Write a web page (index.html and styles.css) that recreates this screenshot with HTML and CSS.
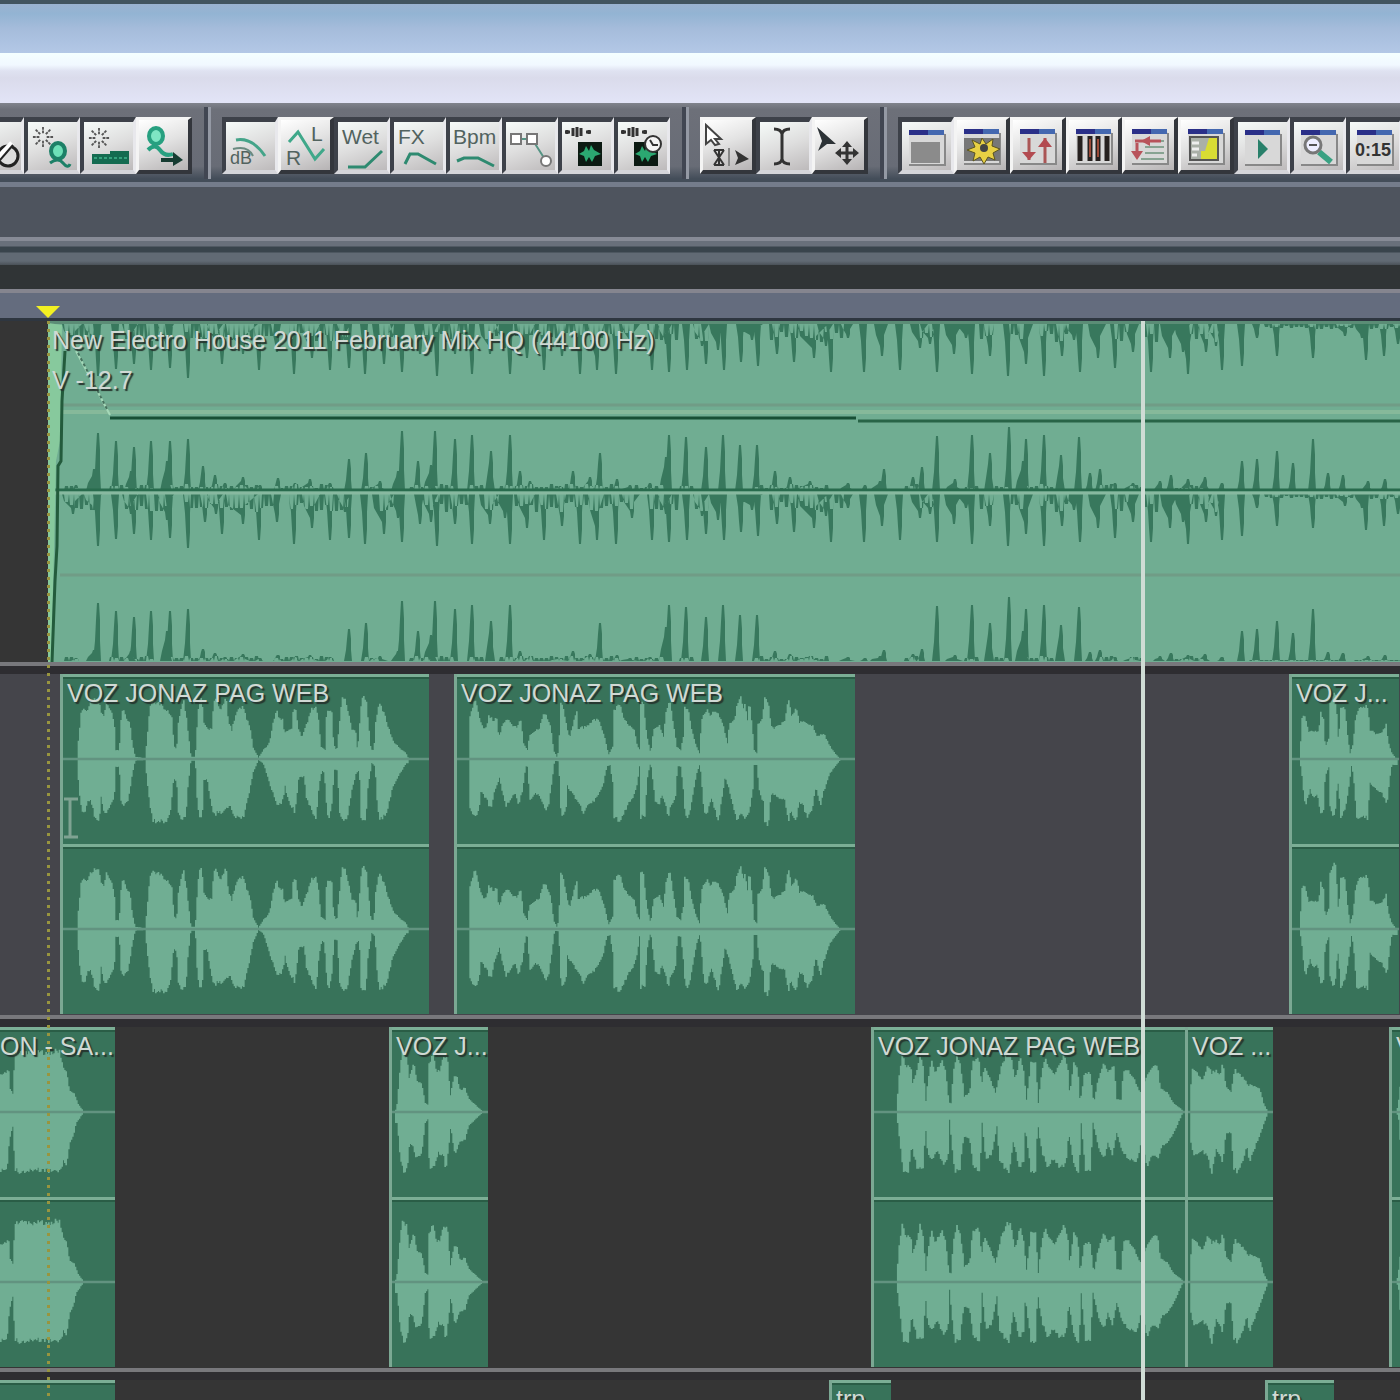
FILE: index.html
```html
<!DOCTYPE html>
<html lang="en">
<head>
  <meta charset="UTF-8" />
  <meta name="viewport" content="width=device-width, initial-scale=1.0"/>
  <title>Multitrack</title>
  <link rel="stylesheet" href="styles.css">
</head>
<body>

  <!-- Shared icon parts -->
  <svg class="defs" aria-hidden="true">
    <symbol id="burst" viewBox="-12 -12 24 24">
      <path d="M0-11V-4M0 11V4M-11 0H-4M11 0H4M-8-8L-3-3M8-8L3-3M-8 8L-3 3M8 8L3 3" fill="none" stroke="#555" stroke-width="2" stroke-dasharray="3 1"/>
    </symbol>
    <symbol id="window" viewBox="0 0 56 56">
      <path d="M11 15H47V48H11Z" fill="#d8d8d8"/>
      <path d="M11 47H47V16" fill="none" stroke="#888" stroke-width="2"/>
      <path d="M11 12H46V17H11Z" fill="#4468b0"/>
      <path d="M11 12H30V17H11Z" fill="#2a2f88"/>
    </symbol>
    <symbol id="chip" viewBox="0 0 56 56">
      <path d="M7 14H12M28 14H33M9 12V16M15 10V18M19 9V19M23 10V18M31 12V16" stroke="#333" stroke-width="3"/>
      <path d="M20 24H44V48H20Z" fill="#0c1a12"/>
      <path d="M21 36L26 33L28 28L31 33L33 27L36 32L43 36L37 38L34 44L31 39L28 44L26 38Z" fill="#2ba871"/>
    </symbol>
  </svg>

  <header>
    <div class="title-bar"></div>
    <div class="menu-bar"></div>
  </header>

  <nav class="toolbar">
    <div class="group">
      <button class="tool pressed" aria-label="Draw"><svg viewBox="0 0 56 56"><circle cx="40" cy="38" r="10" fill="#ddd" stroke="#222" stroke-width="3"/><path d="M28 42L44 25" stroke="#fff" stroke-width="5"/><path d="M32 42L45 27" stroke="#222" stroke-width="2"/></svg></button>
      <button class="tool pressed" aria-label="Quick effect"><svg viewBox="0 0 56 56"><use href="#burst" x="8" y="8" width="22" height="22"/><ellipse cx="34" cy="33" rx="7" ry="8" fill="#6ee0b8" stroke="#1d8067" stroke-width="4"/><path d="M26 45Q34 39 39 45T46 46" fill="none" stroke="#1d8067" stroke-width="3"/></svg></button>
      <button class="tool pressed" aria-label="Quick effect on clip"><svg viewBox="0 0 56 56"><use href="#burst" x="8" y="9" width="22" height="22"/><path d="M12 36H30V33H49V46H12Z" fill="#146b50"/><path d="M14 40H48" stroke="#35a27d" stroke-width="2" stroke-dasharray="3 2"/></svg></button>
      <button class="tool" aria-label="Apply effect"><svg viewBox="0 0 56 56"><ellipse cx="21" cy="19" rx="7" ry="8" fill="#7ee6c4" stroke="#27a080" stroke-width="4"/><path d="M13 33Q20 26 25 33T38 37" fill="none" stroke="#27a080" stroke-width="4"/><path d="M26 41H38V35L48 43L38 49V45H26Z" fill="#163c32"/></svg></button>
    </div>

    <div class="group">
      <button class="tool pressed" aria-label="Volume envelopes"><svg viewBox="0 0 56 56"><path d="M14 22Q30 19 43 38" fill="none" stroke="#44a489" stroke-width="3"/><text x="8" y="46" class="ico-text small">dB</text><path d="M11 31Q26 27 31 38" fill="none" stroke="#6a8a80" stroke-width="2"/></svg></button>
      <button class="tool" aria-label="Pan envelopes"><svg viewBox="0 0 56 56"><path d="M12 25L21 15L38 42L47 32" fill="none" stroke="#3fa88a" stroke-width="3"/><text x="34" y="24" class="ico-text">L</text><text x="9" y="48" class="ico-text">R</text></svg></button>
      <button class="tool pressed" aria-label="Wet envelopes"><svg viewBox="0 0 56 56"><text x="8" y="26" class="ico-text">Wet</text><path d="M14 49H31L48 33" fill="none" stroke="#2e8a70" stroke-width="3"/></svg></button>
      <button class="tool pressed" aria-label="FX envelopes"><svg viewBox="0 0 56 56"><text x="8" y="26" class="ico-text">FX</text><path d="M15 46L20 36H28L46 46" fill="none" stroke="#2e8a70" stroke-width="3"/></svg></button>
      <button class="tool pressed" aria-label="Tempo envelopes"><svg viewBox="0 0 56 56"><text x="7" y="26" class="ico-text">Bpm</text><path d="M11 43L18 40H32L48 48" fill="none" stroke="#2e8a70" stroke-width="3"/></svg></button>
      <button class="tool pressed" aria-label="Envelope editing"><svg viewBox="0 0 56 56"><path d="M14 21H30L44 43" fill="none" stroke="#559484" stroke-width="2"/><g fill="#fff" stroke="#777" stroke-width="2"><rect x="9" y="16" width="10" height="10"/><rect x="25" y="16" width="10" height="10"/><circle cx="44" cy="43" r="5"/></g></svg></button>
      <button class="tool pressed" aria-label="Clip to wave"><svg viewBox="0 0 56 56"><use href="#chip"/></svg></button>
      <button class="tool pressed" aria-label="Clip time stretch"><svg viewBox="0 0 56 56"><use href="#chip"/><circle cx="39" cy="26" r="8" fill="#f4f4f4" stroke="#333" stroke-width="2"/><path d="M36 22L39 27L44 27" fill="none" stroke="#333" stroke-width="2"/></svg></button>
    </div>

    <div class="group">
      <button class="tool" aria-label="Hybrid tool"><svg viewBox="0 0 56 56"><path d="M7 8L22 22H16L20 27L16 28L12 23L7 27Z" fill="#fff" stroke="#444" stroke-width="2"/><path d="M15 33L25 48M25 33L15 48M15 33H25M15 48H25M20 33V48" stroke="#333" stroke-width="2"/><path d="M30 31V49" stroke="#888" stroke-width="2"/><path d="M36 33L50 42L36 48L39 41Z" fill="#333"/></svg></button>
      <button class="tool pressed" aria-label="Time selection tool"><svg viewBox="0 0 56 56"><path d="M18 11Q25 11 26 16Q27 11 34 11M18 46Q25 46 26 41Q27 46 34 46M26 15V42" fill="none" stroke="#333" stroke-width="3"/></svg></button>
      <button class="tool" aria-label="Move clip tool"><svg viewBox="0 0 56 56"><path d="M6 10L25 27L16 27L7 34L11 24Z" fill="#2c3236"/><path d="M36 27V45M27 36H45" stroke="#333" stroke-width="3"/><path d="M36 24L41 30H31ZM36 48L41 42H31ZM24 36L30 31V41ZM48 36L42 31V41Z" fill="#333"/></svg></button>
    </div>

    <div class="group">
      <button class="tool pressed" aria-label="Organizer"><svg viewBox="0 0 56 56"><use href="#window"/><path d="M13 24H42V45H13Z" fill="#8b8b8b"/></svg></button>
      <button class="tool" aria-label="Cue list"><svg viewBox="0 0 56 56"><use href="#window"/><path d="M11 21H47V44H11Z" fill="#777"/><path d="M29 21L33 27L40 22L39 29L47 32L40 36L42 43L35 40L31 47L27 40L20 44L22 36L14 33L22 30L19 23L27 27Z" fill="#e8d044" stroke="#5b5420"/><circle cx="31" cy="31" r="4" fill="#444"/></svg></button>
      <button class="tool" aria-label="Mixer"><svg viewBox="0 0 56 56"><use href="#window"/><path d="M20 21V43M36 21V46" stroke="#a55" stroke-width="3"/><path d="M13 35H27L20 43ZM29 30H43L36 21Z" fill="#b34a50"/></svg></button>
      <button class="tool" aria-label="Track EQ"><svg viewBox="0 0 56 56"><use href="#window"/><path d="M15 19V44M25 19V44M33 19V44M42 19V44" stroke="#26211f" stroke-width="5"/><path d="M25 22V40M33 22V40" stroke="#9b4a38" stroke-width="2"/></svg></button>
      <button class="tool" aria-label="Track properties"><svg viewBox="0 0 56 56"><use href="#window"/><path d="M18 24H43M24 30H43M24 36H43M20 42H43" stroke="#87a392" stroke-width="2"/><path d="M14 24H40" stroke="#b8535b" stroke-width="3"/><path d="M20 24L29 19V29ZM10 34H22L16 43Z" fill="#b8535b"/><path d="M16 26V36" stroke="#b8535b" stroke-width="3"/></svg></button>
      <button class="tool" aria-label="Load meter"><svg viewBox="0 0 56 56"><use href="#window"/><path d="M13 20H41V43H13Z" fill="#aab0a8" stroke="#555" stroke-width="2"/><path d="M32 21H40V42H24L24 34L28 34Z" fill="#d8dc34"/><path d="M15 26H22M15 32H22M15 38H20" stroke="#eee" stroke-width="3"/></svg></button>
      <button class="tool pressed" aria-label="Transport"><svg viewBox="0 0 56 56"><use href="#window"/><path d="M24 21L34 31L24 41Z" fill="#28806a"/></svg></button>
      <button class="tool pressed" aria-label="Zoom controls"><svg viewBox="0 0 56 56"><use href="#window"/><path d="M29 34L41 44" stroke="#3aa283" stroke-width="6"/><circle cx="23" cy="27" r="8" fill="#eef" stroke="#777" stroke-width="3"/><path d="M19 27H27" stroke="#555" stroke-width="2"/></svg></button>
      <button class="tool pressed" aria-label="Time display"><svg viewBox="0 0 56 56"><use href="#window"/><text x="9" y="38" class="ico-text time">0:15</text></svg></button>
    </div>
  </nav>

  <div class="dock"></div>
  <div class="splitter"></div>
  <div class="overview"></div>
  <div class="ruler"></div>

  <main class="session">
    <section class="track">
      <div class="clip mix" data-start="48" data-end="1400">
        <svg class="mix-wave" viewBox="48 0 1352 341" preserveAspectRatio="none">
          <path id="mixSpikes" class="spikes"/>
          <path d="M60 84H1400M60 254H1400" class="grid-line"/>
          <path d="M60 91H1400" class="level-light"/>
          <path d="M48 169H1400" class="zero-dark"/>
          <path d="M48 172H1400" class="zero-light"/>
          <path d="M76 30L110 94" class="pan-light"/>
          <path d="M78 32L108 90" class="pan-dark"/>
          <path d="M110 97H856" class="volume"/>
          <path d="M858 100H1400" class="volume thin"/>
          <path d="M48 2L62 4L60 120L56 140L54 230L51 341H48Z" class="fade-fill"/>
          <path d="M65 30L62 80L61 140L58 145L57 225L55 260L52 341" class="fade-dark"/>
        </svg>
        <span class="clip-name">New Electro House 2011 February Mix HQ (44100 Hz)</span>
        <span class="clip-volume">V -12.7</span>
      </div>
    </section>

    <section class="track grey">
      <div class="clip" data-start="60" data-end="429" data-wave="intro"><span class="clip-name">VOZ JONAZ PAG WEB</span></div>
      <div class="clip" data-start="454" data-end="855" data-wave="verse"><span class="clip-name">VOZ JONAZ PAG WEB</span></div>
      <div class="clip" data-start="1289" data-end="1399" data-wave="shout"><span class="clip-name">VOZ J...</span></div>
    </section>

    <section class="track">
      <div class="clip open" data-start="0" data-end="115" data-wave="station"><span class="clip-name">ON - SA...</span></div>
      <div class="clip" data-start="389" data-end="488" data-wave="short"><span class="clip-name">VOZ J...</span></div>
      <div class="clip" data-start="871" data-end="1185" data-wave="hook"><span class="clip-name">VOZ JONAZ PAG WEB</span></div>
      <div class="clip" data-start="1185" data-end="1273" data-wave="tail"><span class="clip-name">VOZ ...</span></div>
      <div class="clip" data-start="1389" data-end="1400" data-wave="next"><span class="clip-name">V</span></div>
    </section>

    <section class="track">
      <div class="clip open" data-start="0" data-end="115" data-wave="silent"></div>
      <div class="clip" data-start="829" data-end="891" data-wave="silent"><span class="clip-name">trp...</span></div>
      <div class="clip" data-start="1265" data-end="1334" data-wave="silent"><span class="clip-name">trp...</span></div>
    </section>

    <!-- Start marker, playhead and mouse pointer lie over the tracks -->
    <div class="marker"></div>
    <div class="playhead"></div>
    <svg class="pointer" viewBox="0 0 16 42"><path d="M0 2H14M0 40H14M6 2V40" fill="none" stroke="#7fa392" stroke-width="3"/></svg>
  </main>

  <script src="script.js"></script>
</body>
</html>
```

FILE: styles.css
```css
body {
  font-family: "Liberation Sans", Arial, sans-serif;
  margin: 0;
  height: 100vh;
  overflow: hidden;
  display: flex;
  flex-direction: column;
  background-color: #353535;
}

.defs {
  position: absolute;
  width: 0;
  height: 0;
}

.title-bar {
  height: 49px;
  border-top: 4px solid #42545f;
  background: linear-gradient(#9ab2d0, #93b4d3 20%, #a5bcdb 50%, #b3c8e6);
}

.menu-bar {
  height: 50px;
  background: linear-gradient(#f4ffff, #f1f8ff 24%, #dfe2f1 36%, #dadbeb 50%, #e2e4f7);
}

.toolbar {
  display: flex;
  padding: 14px 0 8px;
  background: linear-gradient(#80838c, #6d7079 8%, #686c76 80%, #434d59 96%);
  border-bottom: 5px solid #747c8b;
  flex-shrink: 0;
}

.group {
  display: flex;
  flex-shrink: 0;
  position: relative;
  margin-left: 30px;
}

.group:first-child {
  margin-left: -32px;
}

.group + .group::before {
  content: "";
  position: absolute;
  left: -18px;
  top: -10px;
  bottom: -5px;
  width: 3px;
  border-left: 4px solid #414652;
  background-color: #9499a4;
}

.tool {
  width: 56px;
  height: 57px;
  padding: 0;
  border: 3px solid;
  border-color: #f4f4f4 #33363c #33363c #f4f4f4;
  border-right-width: 4px;
  border-bottom-width: 4px;
  background: linear-gradient(160deg, #fff, #e3e3e3 45%, #b6b3b4);
  overflow: hidden;
}

.tool.pressed {
  border-color: #3d4149 #e8e8ec #d4d5da #3d4149;
  border-top-width: 5px;
  border-left-width: 4px;
  border-right-width: 3px;
  background: linear-gradient(160deg, #f6fbf9, #dedede 50%, #bdbabb);
}

.tool svg {
  display: block;
  width: 56px;
  height: 56px;
  margin: -5px -4px;
}

.tool.pressed svg {
  margin: -4px;
}

.ico-text {
  font-size: 21px;
  fill: #52635f;
}

.ico-text.small {
  font-size: 18px;
}

.ico-text.time {
  font-size: 18px;
  font-weight: bold;
  fill: #333;
}

.dock {
  height: 50px;
  flex-shrink: 0;
  background-color: #4e545e;
}

.splitter {
  height: 28px;
  flex-shrink: 0;
  background: linear-gradient(#878b96 4px, #69707b 4px 9px, #39444c 10px 15px, #616a74 16px 24px, #4a5158);
}

.overview {
  height: 24px;
  flex-shrink: 0;
  background-color: #303436;
}

.ruler {
  height: 25px;
  flex-shrink: 0;
  border-top: 4px solid #85858f;
  border-bottom: 3px solid #2e3640;
  background-color: #646c7e;
}

/* Tracks */
.session {
  position: relative;
  flex: 1;
  overflow: hidden;
}

.track {
  display: flex;
  box-sizing: border-box;
  height: 353px;
  border-bottom: 8px solid #2e2d31;
  background-color: #353535;
  box-shadow: inset 0 -4px #78787c;
  overflow: hidden;
}

.track.grey {
  background-color: #45454b;
}

.clip {
  position: relative;
  box-sizing: border-box;
  flex-shrink: 0;
  height: 340px;
  border-left: 3px solid #7ba893;
  background-color: #38735a;
}

.clip.open {
  border-left: 0;
}

.lane {
  display: block;
  width: 100%;
  height: 170px;
  box-shadow: inset 0 3px #7bae95, inset 0 5px #2a5d46;
}

.lane .wave {
  fill: #70ae93;
}

.lane .center {
  fill: none;
  stroke: #629380;
  stroke-width: 7;
}

.clip-name,
.clip-volume {
  position: absolute;
  left: 4px;
  top: 5px;
  font-size: 25px;
  line-height: 28px;
  white-space: nowrap;
  color: #d0d9d4;
  text-shadow: 2px 2px 1px #26352e;
}

.clip.open .clip-name {
  left: 0;
}

/* Music bed */
.clip.mix {
  height: 341px;
  border-left: 0;
  background-color: #70ad92;
}

.clip-volume {
  top: 45px;
}

.mix-wave {
  display: block;
  width: 100%;
  height: 341px;
  box-shadow: inset 0 3px #5b8d76;
}

.mix-wave path {
  fill: none;
  stroke-width: 2;
}

.mix-wave .spikes {
  fill: #38785d;
}

.mix-wave .grid-line {
  stroke: #709c86;
  stroke-width: 3;
}

.mix-wave .level-light {
  stroke: #86b99a;
  stroke-width: 4;
}

.mix-wave .zero-dark {
  stroke: #286b4d;
  stroke-width: 3;
}

.mix-wave .zero-light {
  stroke: #88b9a0;
  stroke-width: 3;
}

.mix-wave .pan-light {
  stroke: #a4d8b8;
}

.mix-wave .pan-dark {
  stroke: #46725e;
  stroke-dasharray: 3 3;
}

.mix-wave .volume {
  stroke: #174f35;
  stroke-width: 3;
}

.mix-wave .volume.thin {
  stroke: #286447;
}

.mix-wave .fade-fill {
  fill: #87c99d;
}

.mix-wave .fade-dark {
  stroke: #235b3c;
  stroke-width: 3;
}

/* Overlays */
.marker {
  position: absolute;
  left: 47px;
  top: 0;
  bottom: 0;
  width: 3px;
  background: repeating-linear-gradient(#98953f 0 3px, transparent 3px 8px);
}

.ruler::after {
  content: "";
  display: block;
  width: 24px;
  height: 12px;
  margin: 13px 0 0 36px;
  background-color: #f2f022;
  clip-path: polygon(0 0, 100% 0, 50% 100%);
}

.playhead {
  position: absolute;
  left: calc(1141% / 14);
  top: 0;
  bottom: 0;
  width: 4px;
  background-color: #cfdcd5;
}

.pointer {
  position: absolute;
  left: 64px;
  top: 476px;
  width: 16px;
  height: 42px;
}
```

FILE: script.js
```js
// Outlines of the voice clips: x y pairs, three units to a pixel.
// from/to is the part that the clip shows, mid the zero line.
const waves = {
  intro: {
    from: 99, to: 1197, mid: 807,
    top: "143 770 150 700 155 655 165 660 172 660 180 640 195 628 208 630 212 670 222 680 228 635 240 660 252 690 256 780 268 780 272 700 278 655 290 690 300 700 306 760 315 800 345 805 350 760 356 690 360 650 370 636 390 640 400 655 410 660 425 680 432 770 440 780 444 700 452 660 460 630 468 680 478 760 482 800 496 800 500 720 508 625 515 620 520 700 535 715 545 720 552 625 560 625 566 660 575 650 588 625 594 690 605 720 615 680 630 655 640 650 650 690 660 710 668 770 685 803 700 780 715 765 722 740 728 700 740 665 748 685 758 690 762 730 775 720 785 715 790 655 796 650 804 715 815 740 825 715 835 690 845 655 858 650 865 690 872 770 885 780 890 660 905 670 910 760 920 785 928 700 935 625 945 625 955 670 965 720 978 725 982 790 990 690 995 625 1008 625 1015 700 1022 780 1032 780 1036 700 1048 640 1060 665 1075 715 1090 755 1110 775 1128 790 1135 807",
    bottom: "143 850 150 930 160 975 172 940 182 935 195 985 208 992 212 920 225 975 240 950 252 930 256 830 268 830 272 930 280 950 295 930 305 860 315 812 345 810 350 860 360 950 368 995 410 995 422 960 430 870 440 870 444 970 455 992 467 985 472 900 482 812 496 812 502 950 510 995 517 960 518 870 532 870 545 950 555 980 565 965 580 970 600 945 615 985 640 985 655 920 668 850 685 810 700 820 725 900 740 945 755 945 765 890 775 930 795 970 800 920 806 860 822 860 830 930 845 960 858 990 865 900 875 840 883 850 890 960 897 990 905 940 912 840 922 840 930 985 950 992 965 900 978 850 988 840 993 985 1007 990 1012 900 1025 820 1035 830 1042 950 1050 990 1070 975 1085 900 1110 850 1128 820"
  },
  verse: {
    from: 51, to: 1245, mid: 807,
    top: "88 800 90 680 100 640 108 630 114 670 125 710 140 715 145 680 160 690 172 685 175 745 190 700 205 685 218 705 230 710 242 690 250 760 262 780 268 735 285 725 300 710 310 670 320 680 332 710 340 780 350 800 357 780 360 640 368 640 378 700 388 745 400 700 410 660 414 715 440 710 460 690 475 685 485 715 496 750 505 795 518 770 522 660 540 645 550 680 570 710 582 720 592 770 600 780 602 635 610 640 620 740 632 790 640 720 658 705 670 740 680 650 690 640 700 700 710 770 722 780 730 740 733 650 745 655 752 710 765 760 778 790 785 690 800 660 812 680 822 660 840 680 850 710 862 760 868 700 885 690 890 650 903 620 908 655 915 635 922 690 928 630 935 700 942 780 950 790 953 700 965 690 975 620 985 640 992 700 1000 715 1020 705 1035 690 1045 625 1055 680 1068 650 1078 695 1100 700 1118 705 1130 740 1150 730 1165 760 1180 785 1200 807",
    bottom: "88 815 90 960 98 970 105 983 115 970 122 905 140 930 152 960 162 910 178 865 188 910 198 950 210 930 225 910 235 945 248 900 256 830 262 830 270 930 285 910 300 920 315 965 325 950 335 880 343 812 357 815 360 940 368 990 378 950 382 890 400 915 415 940 432 970 445 945 470 925 490 880 500 830 510 825 520 890 522 990 545 990 560 950 575 930 590 890 598 830 602 985 615 975 620 870 632 815 645 930 655 950 665 920 675 940 685 985 692 945 705 930 712 830 722 830 733 920 735 985 745 985 755 930 770 850 780 820 792 970 800 975 815 925 825 960 835 995 845 930 855 860 868 900 880 950 890 990 900 970 915 985 925 980 938 900 942 825 950 825 958 900 970 940 975 1005 985 1005 992 910 1010 920 1035 930 1045 995 1055 960 1065 1000 1078 940 1090 950 1102 990 1115 960 1128 890 1140 950 1152 900 1170 850 1200 810"
  },
  shout: {
    from: 486, to: 807, mid: 807,
    top: "510 800 515 680 525 680 535 725 565 725 572 670 580 690 585 770 598 740 600 640 615 605 622 700 625 760 632 650 645 655 650 720 660 790 670 760 675 690 690 650 712 650 720 720 735 730 752 730 768 705 775 760 785 790 800 807",
    bottom: "510 815 515 850 525 950 540 900 550 925 562 910 572 975 580 960 585 860 597 830 600 950 610 990 618 940 622 860 632 980 645 960 655 900 665 820 672 880 680 985 712 985 720 880 740 900 755 910 770 945 778 870 785 825"
  },
  station: {
    from: 0, to: 345, mid: 817,
    top: "0 710 15 700 25 685 30 750 38 760 45 640 70 638 90 642 120 638 150 645 165 632 180 635 187 680 200 700 208 750 222 760 235 795 252 817",
    bottom: "0 995 15 990 20 990 28 900 38 860 45 990 60 998 90 992 150 995 180 998 190 965 200 980 208 910 220 890 228 850 252 817"
  },
  short: {
    from: 1176, to: 1464, mid: 817,
    top: "1185 817 1192 790 1198 710 1207 630 1220 650 1228 720 1240 665 1250 720 1265 735 1275 790 1283 795 1286 680 1298 640 1310 700 1320 690 1330 650 1342 650 1350 770 1362 710 1370 705 1378 750 1395 745 1405 775 1425 795 1450 817",
    bottom: "1192 850 1200 950 1210 1000 1222 985 1228 910 1240 920 1245 950 1265 945 1275 850 1283 840 1288 985 1300 985 1315 940 1330 950 1337 990 1345 930 1352 860 1365 950 1378 910 1395 900 1405 860 1425 840 1450 817"
  },
  hook: {
    from: 146, to: 987, mid: 817,
    top: "208 800 212 720 222 640 232 680 245 680 250 730 262 690 270 640 280 690 285 795 292 720 300 660 312 700 330 660 340 700 348 790 354 790 360 700 370 640 380 680 390 770 405 760 412 660 430 660 436 740 445 680 460 720 475 760 482 720 490 680 505 640 515 640 525 710 532 710 540 650 550 690 558 780 570 670 582 670 590 790 600 690 610 655 620 690 635 700 650 670 660 640 670 690 675 770 685 670 697 690 703 790 715 700 730 700 740 790 750 730 768 670 778 700 795 680 802 780 815 780 820 690 835 695 850 720 865 760 880 720 895 690 912 670 920 745 940 760 955 790 978 810",
    bottom: "208 830 215 900 225 1000 240 995 247 920 262 985 280 985 284 850 292 950 305 960 318 935 335 985 347 940 350 840 358 930 365 1000 378 990 388 890 405 900 415 990 432 990 438 850 448 960 465 940 478 860 485 960 498 985 510 1000 522 910 540 985 550 970 555 860 570 1000 582 995 588 850 600 940 615 980 630 960 650 985 665 975 672 880 688 985 700 1000 706 850 718 1000 730 990 738 850 755 930 768 960 778 910 790 950 802 880 815 930 835 960 855 970 870 900 885 985 895 945 915 955 925 920 940 910 960 870 978 825"
  },
  tail: {
    from: 996, to: 1226, mid: 817,
    top: "1002 760 1008 690 1020 700 1035 720 1048 680 1060 700 1072 690 1082 705 1090 670 1098 740 1112 755 1122 690 1135 705 1150 720 1158 740 1170 735 1190 750 1200 790 1212 817",
    bottom: "1002 900 1012 950 1035 935 1048 950 1060 1000 1072 930 1090 970 1098 880 1112 880 1120 985 1130 1000 1145 960 1155 920 1162 970 1178 920 1195 870 1212 820"
  },
  next: { from: 0, to: 24, mid: 817, top: "14 817 20 780 24 740", bottom: "14 817 20 840 24 900" },
  silent: { from: 0, to: 100, mid: 817, top: "0 817 100 817", bottom: "0 817 100 817" }
};

// Repeatable noise from 0 to 1
function noise(n) {
  const value = Math.sin(n * 12.9898) * 43758.5453;
  return value - Math.floor(value);
}

function levels(text) {
  return text.match(/\d+ \d+/g).map(pair => pair.split(" ").map(Number));
}

function levelAt(points, x) {
  const next = points.findIndex(point => point[0] >= x);
  if (next < 0) return points[points.length - 1][1];
  if (next === 0) return points[0][1];
  const [x0, y0] = points[next - 1];
  const [x1, y1] = points[next];
  return y0 + (y1 - y0) * (x - x0) / (x1 - x0);
}

// One narrow column per sample, with the ragged ends of a peak display
function wavePath(wave) {
  const top = levels(wave.top);
  const bottom = levels(wave.bottom);
  const end = top[top.length - 1][0];
  const step = 4;
  let d = "";
  for (let x = top[0][0]; x < end; x += step) {
    const up = (wave.mid - levelAt(top, x + step / 2)) * (1.04 - noise(x) * 0.08);
    const low = (levelAt(bottom, x + step / 2) - wave.mid) * (1.03 - noise(x + 7) * 0.08);
    d += `M${x} ${Math.round(wave.mid - up)}H${x + step + 1}V${Math.round(wave.mid + low)}H${x}Z`;
  }
  return d;
}

function laneSvg(wave) {
  return `
    <svg class="lane" viewBox="${wave.from} ${wave.mid - 255} ${wave.to - wave.from} 510" preserveAspectRatio="none">
      <path class="wave" d="${wavePath(wave)}"/>
      <path class="center" d="M${wave.from} ${wave.mid}H${wave.to}"/>
    </svg>`;
}

// Place every clip on its track, which is 1400 units long
document.querySelectorAll(".track").forEach(track => {
  let end = 0;
  track.querySelectorAll(".clip").forEach(clip => {
    const start = Number(clip.dataset.start);
    const stop = Number(clip.dataset.end);
    clip.style.marginLeft = (start - end) / 14 + "%";
    clip.style.width = (stop - start) / 14 + "%";
    end = stop;
    if (clip.dataset.wave) {
      const lane = laneSvg(waves[clip.dataset.wave]);
      clip.insertAdjacentHTML("afterbegin", lane + lane);
    }
  });
});

// Peaks of the music bed: x, height and (for the broad ones) width
const up = [
  [76, 6], [98, 58], [94, 22, 12], [116, 50], [134, 44], [131, 20, 10], [151, 50], [170, 50], [167, 30, 10], [188, 52], [203, 25], [215, 16],
  [225, 8], [243, 14, 14], [260, 6], [278, 13], [295, 8], [310, 12, 16], [330, 8], [349, 32], [366, 38], [380, 10, 16],
  [402, 60], [398, 20, 10], [418, 30], [435, 60], [431, 26, 12], [455, 52], [472, 56], [491, 40, 8], [510, 56], [520, 20], [530, 10],
  [560, 5, 16], [573, 20], [590, 14, 12], [600, 38], [617, 12], [630, 6, 16], [650, 8], [669, 56], [666, 34, 10], [686, 54],
  [706, 44], [723, 56], [740, 46], [757, 46], [775, 20], [790, 14], [810, 10, 22], [848, 8, 14], [865, 6], [884, 22],
  [880, 10, 16], [913, 14], [922, 24], [937, 55], [955, 12, 16], [972, 56], [990, 38, 8], [1009, 64], [1026, 52], [1023, 30, 12],
  [1044, 56], [1061, 36, 8], [1079, 54], [1090, 18], [1100, 22], [1115, 8], [1133, 8, 16], [1160, 10, 10], [1171, 16],
  [1188, 12, 12], [1205, 14, 10], [1222, 8], [1242, 30], [1257, 32], [1277, 40], [1293, 28], [1313, 52], [1328, 18],
  [1343, 16], [1368, 10, 10], [1385, 12]
];

const down = [
  [73, 20, 18], [98, 52], [94, 16, 16], [116, 45], [134, 40], [131, 20, 14], [151, 46], [170, 44], [167, 26, 14], [188, 54], [205, 28], [222, 40],
  [216, 20, 14], [243, 30, 30], [259, 46], [277, 28, 8], [294, 50], [312, 34, 16], [330, 46], [349, 44], [345, 18, 12], [365, 50],
  [384, 40, 20], [402, 48], [398, 24, 12], [420, 30, 8], [437, 52], [431, 28, 14], [455, 30], [472, 50], [490, 30, 18], [510, 50],
  [505, 24, 14], [527, 34, 16], [544, 46], [562, 32, 8], [580, 50], [597, 46, 14], [616, 50], [632, 24, 16], [652, 46],
  [669, 48], [666, 20, 12], [687, 46], [706, 40], [702, 22, 14], [724, 46], [718, 26, 14], [741, 38], [752, 16, 22], [758, 42],
  [777, 30], [794, 38], [814, 34, 28], [831, 48], [826, 22, 14], [848, 14, 10], [864, 48], [882, 32, 12], [900, 46],
  [920, 24, 16], [937, 48], [930, 20, 16], [954, 30, 16], [972, 50], [966, 14, 12], [990, 32, 8], [1008, 52], [1026, 40, 14],
  [1044, 52], [1062, 32, 8], [1080, 48], [1074, 16, 12], [1098, 34, 16], [1115, 44], [1133, 28, 12], [1151, 48],
  [1170, 34, 16], [1188, 50, 10], [1183, 28, 14], [1206, 28, 12], [1222, 46], [1216, 22, 12], [1242, 42], [1257, 14],
  [1277, 32], [1313, 34], [1345, 12, 14], [1366, 36], [1362, 14, 12], [1384, 32], [1398, 20]
];

// A spike is a blunt needle on a ragged foot that leans to its left
function spikes(list, base, scale) {
  return list.map(([x, height, width = 6]) => {
    const tip = Math.round(base + height * scale);
    const knee = Math.round(base + height * scale * 0.7);
    const foot = Math.round(base + height * scale * 0.35);
    const half = Math.round(width / 2);
    return `M${x - half - 2} ${base}L${x - half} ${foot}L${x - 2} ${knee}L${x - 1} ${tip}H${x + 1}L${x + 2} ${knee}L${x + 2} ${foot}L${x + half} ${base}Z`;
  }).join("");
}

// Low level material between the peaks, in uneven blocks
function floor(base, size, seed) {
  let d = "";
  for (let x = 64; x < 1400; x += 5) {
    const active = x < 1230 ? 1 : 0.3;
    const gate = noise(Math.floor(x / 15) + seed) > 0.35 ? 1 : 0;
    const height = Math.round((0.4 + noise(x + seed) * 0.6) * gate * size * active);
    d += `M${x} ${base}h5l-1 ${height}h-3Z`;
  }
  return d;
}

document.getElementById("mixSpikes").setAttribute("d",
  spikes(down, 3, 1) +
  floor(3, 18, 1) +
  spikes(up, 170, -1) +
  floor(170, -7, 2) +
  spikes(down, 173, 1) +
  floor(173, 18, 1) +
  spikes(up.map(([x, h, w]) => [x, h > 25 ? h : h / 2, w]), 340, -1) +
  floor(340, -5, 2)
);
```
